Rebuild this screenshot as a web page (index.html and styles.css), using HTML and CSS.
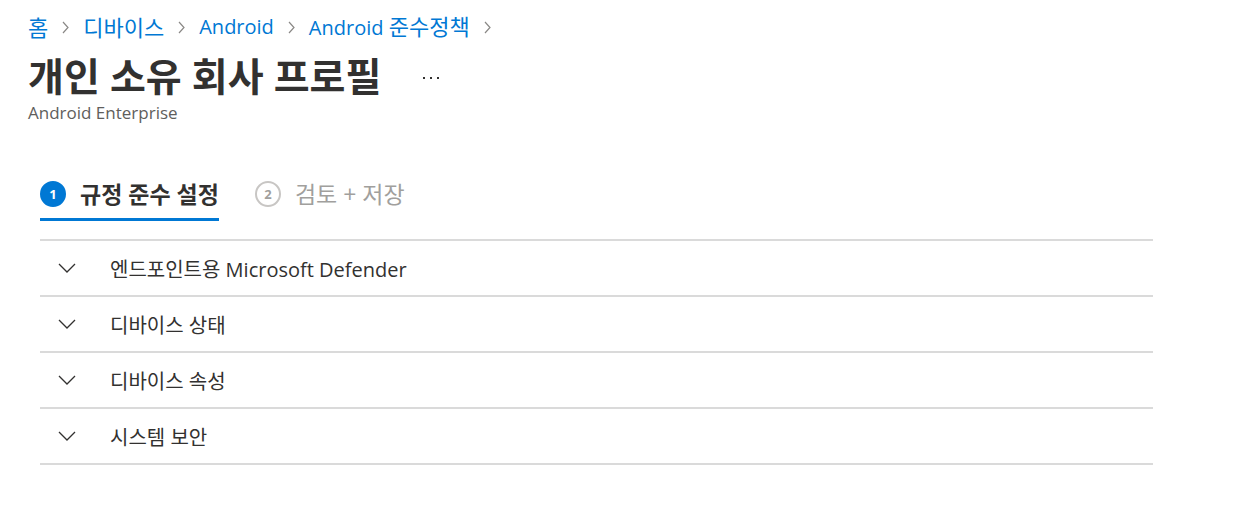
FILE: index.html
```html
<!DOCTYPE html>
<html lang="ko">
<head>
    <meta charset="UTF-8">
    <title>개인 소유 회사 프로필</title>
    <link rel="stylesheet" href="styles.css">
</head>
<body>
    <div class="page">
        <nav class="crumbs">
            <a href="#" class="ko">홈</a>
            <svg class="sep" width="7" height="13" viewBox="0 0 7 13"><path d="M1 1l5 5.5L1 12" fill="none" stroke="#8a8886" stroke-width="1.2"/></svg>
            <a href="#" class="ko">디바이스</a>
            <svg class="sep" width="7" height="13" viewBox="0 0 7 13"><path d="M1 1l5 5.5L1 12" fill="none" stroke="#8a8886" stroke-width="1.2"/></svg>
            <a href="#">Android</a>
            <svg class="sep" width="7" height="13" viewBox="0 0 7 13"><path d="M1 1l5 5.5L1 12" fill="none" stroke="#8a8886" stroke-width="1.2"/></svg>
            <a href="#">Android <span class="ko">준수정책</span></a>
            <svg class="sep" width="7" height="13" viewBox="0 0 7 13"><path d="M1 1l5 5.5L1 12" fill="none" stroke="#8a8886" stroke-width="1.2"/></svg>
        </nav>
        <div class="title-row">
            <h1>개인 소유 회사 프로필</h1>
            <span class="more"><i></i><i></i><i></i></span>
        </div>
        <div class="subtitle">Android Enterprise</div>

        <div class="content">
            <div class="steps">
                <div class="step active">
                    <span class="num">1</span>
                    <span class="label">규정 준수 설정</span>
                </div>
                <div class="step">
                    <span class="num">2</span>
                    <span class="label">검토 + 저장</span>
                </div>
            </div>

            <div class="sections">
                <div class="section">
                    <svg class="chev" width="18" height="10" viewBox="0 0 18 10"><path d="M1 1l8 8 8-8" fill="none" stroke="#323130" stroke-width="1.3"/></svg>
                    <span>엔드포인트용 Microsoft Defender</span>
                </div>
                <div class="section">
                    <svg class="chev" width="18" height="10" viewBox="0 0 18 10"><path d="M1 1l8 8 8-8" fill="none" stroke="#323130" stroke-width="1.3"/></svg>
                    <span>디바이스 상태</span>
                </div>
                <div class="section">
                    <svg class="chev" width="18" height="10" viewBox="0 0 18 10"><path d="M1 1l8 8 8-8" fill="none" stroke="#323130" stroke-width="1.3"/></svg>
                    <span>디바이스 속성</span>
                </div>
                <div class="section">
                    <svg class="chev" width="18" height="10" viewBox="0 0 18 10"><path d="M1 1l8 8 8-8" fill="none" stroke="#323130" stroke-width="1.3"/></svg>
                    <span>시스템 보안</span>
                </div>
            </div>
        </div>
    </div>
</body>
</html>
```

FILE: styles.css
```css
body {
    margin: 0;
    font-family: "Open Sans", "Noto Sans CJK KR", sans-serif;
    color: #323130;
    background-color: #fff;
}

.page {
    padding: 12px 28px 0 28px;
}

.crumbs {
    font-size: 20px;
    line-height: 30px;
    height: 30px;
    display: flex;
    align-items: center;
}

.crumbs a {
    color: #0078d4;
    text-decoration: none;
}

.crumbs .ko {
    font-size: 22px;
    line-height: 30px;
}

.crumbs .sep {
    margin: 0 14px;
}

.title-row {
    display: flex;
    align-items: center;
    margin-top: 9px;
}

h1 {
    margin: 0;
    font-size: 39px;
    font-weight: 700;
    line-height: 50px;
    color: #323130;
}

.more {
    display: flex;
    gap: 5px;
    margin-left: 42px;
    padding-top: 4px;
}

.more i {
    width: 2px;
    height: 2px;
    background-color: #323130;
}

.subtitle {
    font-size: 17px;
    line-height: 22px;
    color: #605e5c;
    margin-top: 1px;
}

.content {
    width: 1113px;
    margin-left: 12px;
    margin-top: 54px;
}

.steps {
    display: flex;
    gap: 36px;
    border-bottom: 2px solid #dadada;
    padding-bottom: 29px;
}

.step {
    display: flex;
    align-items: center;
    gap: 14px;
    font-size: 23px;
    color: #a19f9d;
    position: relative;
    line-height: 32px;
}

.step .num {
    width: 26px;
    height: 26px;
    border-radius: 50%;
    border: 2px solid #c8c6c4;
    box-sizing: border-box;
    font-size: 13px;
    font-weight: 700;
    display: flex;
    align-items: center;
    justify-content: center;
    line-height: 1;
}

.step.active {
    color: #323130;
    font-weight: 700;
}

.step.active .num {
    background-color: #0078d4;
    border-color: #0078d4;
    color: #fff;
}

.step.active::after {
    content: "";
    position: absolute;
    left: 0;
    right: 0;
    bottom: -11px;
    height: 3px;
    background-color: #0078d4;
}

.section {
    display: flex;
    align-items: center;
    gap: 34px;
    height: 54px;
    padding-left: 18px;
    border-bottom: 2px solid #dadada;
    font-size: 20px;
}
```
